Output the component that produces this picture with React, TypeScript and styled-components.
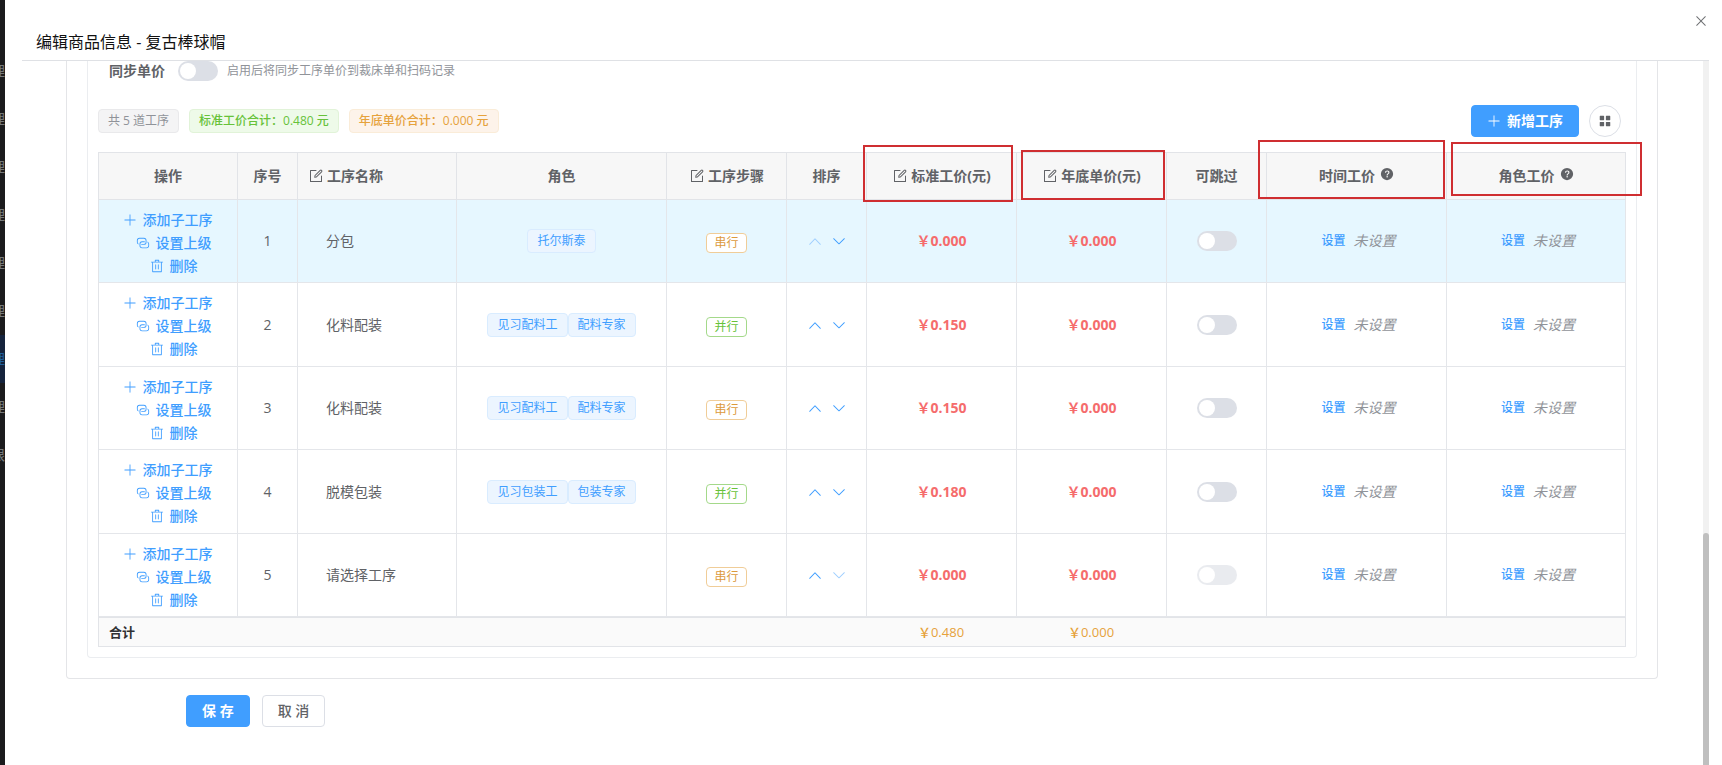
import React from "react";
import styled, { createGlobalStyle, css } from "styled-components";

const GlobalStyle = createGlobalStyle`
  * { box-sizing: border-box; }
  body {
    margin: 0;
    background: #fff;
    color: #606266;
    font-family: "Open Sans", "Noto Sans CJK SC", sans-serif;
    font-size: 14px;
    line-height: 20px;
  }
  button, input { font: inherit; margin: 0; }
  button { cursor: pointer; }
`;

/* ---------- icons ---------- */

const paths = {
  plus: ["M480 480V128a32 32 0 0 1 64 0v352h352a32 32 0 1 1 0 64H544v352a32 32 0 1 1-64 0V544H128a32 32 0 0 1 0-64h352z"],
  link: [
    "M640 384v64H448a128 128 0 0 0-128 128v128a128 128 0 0 0 128 128h320a128 128 0 0 0 128-128V576a128 128 0 0 0-64-110.848V394.88c74.56 26.368 128 97.472 128 181.056v128a192 192 0 0 1-192 192H448a192 192 0 0 1-192-192V576a192 192 0 0 1 192-192h192z",
    "M384 640v-64h192a128 128 0 0 0 128-128V320a128 128 0 0 0-128-128H256a128 128 0 0 0-128 128v128a128 128 0 0 0 64 110.848v70.272A192.064 192.064 0 0 1 64 448V320a192 192 0 0 1 192-192h320a192 192 0 0 1 192 192v128a192 192 0 0 1-192 192H384z",
  ],
  trash: ["M160 256H96a32 32 0 0 1 0-64h256V95.936a32 32 0 0 1 32-32h256a32 32 0 0 1 32 32V192h256a32 32 0 1 1 0 64h-64v672a32 32 0 0 1-32 32H192a32 32 0 0 1-32-32V256zm448-64v-64H416v64h192zM224 896h576V256H224v640zm192-128a32 32 0 0 1-32-32V416a32 32 0 0 1 64 0v320a32 32 0 0 1-32 32zm192 0a32 32 0 0 1-32-32V416a32 32 0 0 1 64 0v320a32 32 0 0 1-32 32z"],
  up: ["m488.832 344.32-339.84 356.672a32 32 0 0 0 0 44.16l.384.384a29.44 29.44 0 0 0 42.688 0l320-335.872 319.872 335.872a29.44 29.44 0 0 0 42.688 0l.384-.384a32 32 0 0 0 0-44.16L535.168 344.32a32 32 0 0 0-46.336 0z"],
  down: ["M831.872 340.864 512 652.672 192.128 340.864a30.592 30.592 0 0 0-42.752 0 29.12 29.12 0 0 0 0 41.6L489.664 714.24a32 32 0 0 0 44.672 0l340.288-331.712a29.12 29.12 0 0 0 0-41.728 30.592 30.592 0 0 0-42.752 0z"],
  edit: [
    "M832 512a32 32 0 1 1 64 0v352a32 32 0 0 1-32 32H160a32 32 0 0 1-32-32V160a32 32 0 0 1 32-32h352a32 32 0 0 1 0 64H192v640h640V512z",
    "m469.952 554.24 52.8-7.552L847.104 222.4a32 32 0 1 0-45.248-45.248L477.44 501.44l-7.552 52.8zm422.4-422.4a96 96 0 0 1 0 135.808l-331.84 331.84a32 32 0 0 1-18.112 9.088L436.8 623.68a32 32 0 0 1-36.224-36.224l15.104-105.6a32 32 0 0 1 9.024-18.112l331.904-331.84a96 96 0 0 1 135.744 0z",
  ],
  question: ["M512 64a448 448 0 1 1 0 896 448 448 0 0 1 0-896zm23.744 191.488c-52.096 0-92.928 14.784-123.2 44.352-30.976 29.568-45.76 70.4-45.76 122.496h80.256c0-29.568 5.632-52.8 17.6-68.992 13.376-19.712 35.2-28.864 66.176-28.864 23.936 0 42.944 6.336 56.32 19.712 12.672 13.376 19.712 31.68 19.712 54.912 0 17.6-6.336 34.496-19.008 49.984l-8.448 9.856c-45.76 40.832-73.216 70.4-82.368 89.408-9.856 19.008-14.08 42.24-14.08 68.992v9.856h80.96v-9.856c0-16.896 3.52-31.68 10.56-45.76 6.336-12.672 15.488-24.64 28.16-35.2 33.792-29.568 54.208-48.576 60.544-55.616 16.896-22.528 26.048-51.392 26.048-86.592 0-42.944-14.08-76.736-42.24-101.376-28.16-25.344-65.472-37.312-111.232-37.312zm-12.672 406.208a54.272 54.272 0 0 0-38.72 14.784 49.408 49.408 0 0 0-15.488 38.016c0 15.488 4.928 28.16 15.488 38.016A54.848 54.848 0 0 0 523.072 768c15.488 0 28.16-4.928 38.72-14.784a51.52 51.52 0 0 0 16.192-38.72 51.968 51.968 0 0 0-15.488-38.016 55.936 55.936 0 0 0-39.424-14.784z"],
  grid: ["M160 128h256q32 0 32 32v256q0 32-32 32H160q-32 0-32-32V160q0-32 32-32zM608 128h256q32 0 32 32v256q0 32-32 32H608q-32 0-32-32V160q0-32 32-32zM160 576h256q32 0 32 32v256q0 32-32 32H160q-32 0-32-32V608q0-32 32-32zM608 576h256q32 0 32 32v256q0 32-32 32H608q-32 0-32-32V608q0-32 32-32z"],
  close: ["M764.288 214.592 512 466.88 259.712 214.592a31.936 31.936 0 0 0-45.12 45.12L466.752 512 214.528 764.224a31.936 31.936 0 1 0 45.12 45.184L512 557.184l252.288 252.288a31.936 31.936 0 0 0 45.12-45.12L557.12 512.064l252.288-252.352a31.936 31.936 0 1 0-45.12-45.184z"],
};

const Svg = styled.svg<{ $size: number }>`
  display: block;
  flex: none;
  width: ${(p) => p.$size}px;
  height: ${(p) => p.$size}px;
  fill: currentColor;
`;

function Icon({ name, size = 14 }: { name: keyof typeof paths; size?: number }) {
  return (
    <Svg $size={size} viewBox="0 0 1024 1024" aria-hidden="true">
      {paths[name].map((d) => (
        <path key={d} d={d} />
      ))}
    </Svg>
  );
}

/* ---------- page frame ---------- */

const Page = styled.div`
  display: flex;
  height: 100vh;
  min-height: 720px;
  overflow: hidden;
`;

const Sidebar = styled.aside`
  width: 5px;
  flex: none;
  padding-top: 47px;
  overflow: hidden;
  background: #1b1b1d;
`;

const SideItem = styled.div<{ $active?: boolean }>`
  display: flex;
  align-items: center;
  justify-content: flex-end;
  height: 48px;
  color: ${(p) => (p.$active ? "#1f5f9e" : "#75797b")};
  background: ${(p) => (p.$active ? "#15233c" : "transparent")};
`;

const Drawer = styled.main`
  display: flex;
  flex-direction: column;
  flex: 1;
  min-width: 0;
  padding: 0 13px 0 17px;
`;

const DrawerHeader = styled.header`
  display: flex;
  align-items: flex-start;
  justify-content: space-between;
  flex: none;
  height: 61px;
  padding-left: 14px;
  border-bottom: 1px solid #dfe1e5;
`;

const Title = styled.h1`
  margin: 30px 0 0;
  color: #111;
  font-size: 16px;
  font-weight: 400;
  line-height: 24px;
`;

const CloseButton = styled.button`
  margin-top: 13px;
  padding: 0;
  border: 0;
  background: none;
  color: #6e7073;
`;

const Viewport = styled.div`
  display: flex;
  flex: 1;
  min-height: 0;
`;

const Content = styled.div`
  flex: 1;
  min-width: 0;
  padding: 0 45px 0 44px;
`;

const ScrollTrack = styled.div`
  display: flex;
  align-items: flex-end;
  width: 6px;
  flex: none;
  background: #f1f1f1;
`;

const ScrollThumb = styled.div`
  width: 100%;
  height: 33%;
  border-radius: 3px 3px 0 0;
  background: #bfbfbf;
`;

const Panel = styled.section`
  padding: 0 20px 20px;
  border: 1px solid #e4e5e8;
  border-top: 0;
  border-radius: 0 0 4px 4px;
`;

const InnerPanel = styled.div`
  padding: 0 10px 10px;
  border: 1px solid #ebedf0;
  border-top: 0;
  border-radius: 0 0 4px 4px;
`;

const SyncRow = styled.div`
  display: flex;
  align-items: center;
  height: 20px;
  padding-left: 11px;
`;

const SyncLabel = styled.label`
  margin-right: 13px;
  font-weight: 700;
`;

const Hint = styled.span`
  margin-left: 9px;
  color: #909399;
  font-size: 12px;
`;

const Switch = styled.input`
  display: block;
  appearance: none;
  width: 40px;
  height: 20px;
  padding: 2px;
  border-radius: 10px;
  background: #dcdfe6;
  cursor: pointer;
  &::before {
    content: "";
    display: block;
    width: 16px;
    height: 16px;
    border-radius: 50%;
    background: #fff;
  }
  &:checked { background: #409eff; }
  &:checked::before { margin-left: 20px; }
  &:disabled { opacity: 0.6; cursor: not-allowed; }
`;

const Toolbar = styled.div`
  display: flex;
  align-items: center;
  gap: 10px;
  margin: 24px 5px 15px 0;
`;

const Spacer = styled.div`
  flex: 1;
`;

const tones = {
  info: css`color: #909399; background: #f4f4f5; border-color: #e9e9eb;`,
  success: css`color: #67c23a; background: #eefae9; border-color: #e1f3d8;`,
  warning: css`color: #e6a23c; background: #fdf3ea; border-color: #faecd8;`,
  primary: css`color: #409eff; background: #ecf5ff; border-color: #d9ecff;`,
  plainWarning: css`color: #dc9a3c; background: #fff; border-color: #f0cd98;`,
  plainSuccess: css`color: #67c23a; background: #fff; border-color: #a4d98a;`,
};

const Tag = styled.span<{ $tone: keyof typeof tones; $small?: boolean; $strong?: boolean }>`
  display: inline-flex;
  align-items: center;
  height: ${(p) => (p.$small ? 20 : 24)}px;
  padding: 0 ${(p) => (p.$small ? 7 : 9)}px;
  border: 1px solid;
  border-radius: 4px;
  font-size: 12px;
  font-weight: ${(p) => (p.$strong ? 500 : 400)};
  white-space: nowrap;
  ${(p) => tones[p.$tone]}
`;

const Button = styled.button<{ $primary?: boolean }>`
  display: inline-flex;
  align-items: center;
  justify-content: center;
  gap: 6px;
  height: 32px;
  padding: 0 15px;
  border: 1px solid ${(p) => (p.$primary ? "#409eff" : "#dcdfe6")};
  border-radius: 4px;
  background: ${(p) => (p.$primary ? "#409eff" : "#fff")};
  color: ${(p) => (p.$primary ? "#fff" : "#606266")};
  font-weight: ${(p) => (p.$primary ? 700 : 500)};
`;

const RoundButton = styled.button`
  display: inline-flex;
  align-items: center;
  justify-content: center;
  width: 32px;
  height: 32px;
  padding: 0;
  border: 1px solid #dcdfe6;
  border-radius: 50%;
  background: #fff;
  color: #606266;
`;

/* ---------- table ---------- */

const Table = styled.table`
  width: 100%;
  table-layout: fixed;
  border-collapse: separate;
  border-spacing: 0;
  border: solid #e2e4e8;
  border-width: 1px 0 0 1px;
`;

const Col = styled.col<{ $width?: number }>`
  width: ${(p) => (p.$width ? `${p.$width}px` : "auto")};
`;

const HeadCell = styled.th`
  position: relative;
  height: 47px;
  padding: 0 10px;
  border: solid #e2e4e8;
  border-width: 0 1px 1px 0;
  background: #f7f7f7;
  font-weight: 700;
`;

const HeadLabel = styled.span<{ $left?: boolean }>`
  display: flex;
  align-items: center;
  justify-content: ${(p) => (p.$left ? "flex-start" : "center")};
  gap: 3px;
`;

const HelpMark = styled.span`
  padding: 0 0 4px 2px;
`;

/* Red frame laid over a heading; the four insets are measured from its cell. */
const Frame = styled.span<{ $inset: string }>`
  position: absolute;
  z-index: 1;
  inset: ${(p) => p.$inset};
  border: 2px solid #cf2e31;
  pointer-events: none;
`;

const Row = styled.tr<{ $current?: boolean }>`
  height: 83px;
  background: ${(p) => (p.$current ? "#e6f7ff" : "#fff")};
  &:nth-child(even) { height: 84px; }
`;

const Cell = styled.td<{ $name?: boolean }>`
  padding: ${(p) => (p.$name ? "0 10px 0 28px" : "0")};
  border: solid #e4e6ea;
  border-width: 0 1px 1px 0;
  text-align: ${(p) => (p.$name ? "left" : "center")};
`;

const Actions = styled.div`
  display: flex;
  flex-direction: column;
  align-items: center;
  gap: 3px;
  padding: 3px 1px 0 0;
`;

const LinkButton = styled.button<{ $shifted?: boolean }>`
  display: inline-flex;
  align-items: center;
  gap: 6px;
  margin-left: ${(p) => (p.$shifted ? 12 : 0)}px;
  padding: 0;
  border: 0;
  background: none;
  color: #409eff;
  font-weight: 500;
`;

const Centered = styled.div<{ $gap?: number }>`
  display: flex;
  align-items: center;
  justify-content: center;
  gap: ${(p) => p.$gap ?? 0}px;
`;

const StepTag = styled(Centered)`
  padding-top: 4px;
`;

const ArrowButton = styled.button`
  padding: 0;
  border: 0;
  background: none;
  color: #409eff;
  &:disabled { color: #a0cfff; cursor: not-allowed; }
`;

const Price = styled.span`
  color: #f56c6c;
  font-weight: 700;
`;

const SetButton = styled.button`
  padding: 0 4px;
  border: 0;
  background: none;
  color: #409eff;
  font-size: 12px;
  font-weight: 500;
`;

const Unset = styled.span`
  color: #909399;
  font-style: italic;
`;

const TotalCell = styled.td<{ $label?: boolean; $last?: boolean }>`
  height: 30px;
  padding: ${(p) => (p.$label ? "0 10px" : "0 2px 0 0")};
  border: solid #e2e4e8;
  border-width: 1px ${(p) => (p.$last ? 1 : 0)}px 1px 0;
  background: #fafafa;
  color: ${(p) => (p.$label ? "#303133" : "#e6a23c")};
  font-size: 13px;
  font-weight: ${(p) => (p.$label ? 700 : 500)};
  text-align: ${(p) => (p.$label ? "left" : "center")};
`;

const FormActions = styled.div`
  display: flex;
  gap: 12px;
  padding: 16px 0 0 120px;
`;

/* ---------- data ---------- */

type Process = {
  name: string;
  roles: string[];
  serial: boolean;
  price: string;
  yearEnd: string;
  locked?: boolean;
};

const processes: Process[] = [
  { name: "分包", roles: ["托尔斯泰"], serial: true, price: "0.000", yearEnd: "0.000" },
  { name: "化料配装", roles: ["见习配料工", "配料专家"], serial: false, price: "0.150", yearEnd: "0.000" },
  { name: "化料配装", roles: ["见习配料工", "配料专家"], serial: true, price: "0.150", yearEnd: "0.000" },
  { name: "脱模包装", roles: ["见习包装工", "包装专家"], serial: false, price: "0.180", yearEnd: "0.000" },
  { name: "请选择工序", roles: [], serial: true, price: "0.000", yearEnd: "0.000", locked: true },
];

type Column = {
  title: string;
  width?: number;
  edit?: boolean;
  help?: boolean;
  left?: boolean;
  frame?: string;
};

const columns: Column[] = [
  { title: "操作", width: 139 },
  { title: "序号", width: 60 },
  { title: "工序名称", width: 159, edit: true, left: true },
  { title: "角色" },
  { title: "工序步骤", width: 120, edit: true },
  { title: "排序", width: 80 },
  { title: "标准工价(元)", width: 150, edit: true, frame: "-8px 3px -3px -4px" },
  { title: "年底单价(元)", width: 150, edit: true, frame: "-3px 1px -1px 4px" },
  { title: "可跳过", width: 100 },
  { title: "时间工价", width: 180, help: true, frame: "-13px 1px 0 -9px" },
  { title: "角色工价", width: 179, help: true, frame: "-11px -17px 3px 4px" },
];

const sideItems = ["理", "理", "理", "理", "理", "理", "理", "理", "限"];

function SettingCell({ label }: { label: string }) {
  return (
    <Cell>
      <Centered $gap={4}>
        <SetButton type="button" aria-label={label}>设置</SetButton>
        <Unset>未设置</Unset>
      </Centered>
    </Cell>
  );
}

function ProcessRow({ item, index }: { item: Process; index: number }) {
  const last = index === processes.length - 1;
  return (
    <Row $current={index === 0}>
      <Cell>
        <Actions>
          <LinkButton type="button"><Icon name="plus" />添加子工序</LinkButton>
          <LinkButton type="button" $shifted><Icon name="link" />设置上级</LinkButton>
          <LinkButton type="button" $shifted><Icon name="trash" />删除</LinkButton>
        </Actions>
      </Cell>
      <Cell>{index + 1}</Cell>
      <Cell $name>{item.name}</Cell>
      <Cell>
        <Centered>
          {item.roles.map((role) => (
            <Tag key={role} $tone="primary">{role}</Tag>
          ))}
        </Centered>
      </Cell>
      <Cell>
        <StepTag>
          <Tag $small $tone={item.serial ? "plainWarning" : "plainSuccess"}>
            {item.serial ? "串行" : "并行"}
          </Tag>
        </StepTag>
      </Cell>
      <Cell>
        <Centered $gap={8}>
          <ArrowButton type="button" aria-label="上移" disabled={index === 0}><Icon name="up" size={16} /></ArrowButton>
          <ArrowButton type="button" aria-label="下移" disabled={last}><Icon name="down" size={16} /></ArrowButton>
        </Centered>
      </Cell>
      <Cell><Price>￥{item.price}</Price></Cell>
      <Cell><Price>￥{item.yearEnd}</Price></Cell>
      <Cell>
        <Centered>
          <Switch type="checkbox" role="switch" aria-label="可跳过" disabled={item.locked} />
        </Centered>
      </Cell>
      <SettingCell label="设置时间工价" />
      <SettingCell label="设置角色工价" />
    </Row>
  );
}

export default function App() {
  return (
    <Page>
      <GlobalStyle />
      <Sidebar aria-hidden="true">
        {sideItems.map((text, i) => (
          <SideItem key={i} $active={i === 6}>{text}</SideItem>
        ))}
      </Sidebar>
      <Drawer>
        <DrawerHeader>
          <Title>编辑商品信息 - 复古棒球帽</Title>
          <CloseButton type="button" aria-label="关闭"><Icon name="close" size={16} /></CloseButton>
        </DrawerHeader>
        <Viewport>
          <Content>
            <Panel>
              <InnerPanel>
                <SyncRow>
                  <SyncLabel htmlFor="sync-price">同步单价</SyncLabel>
                  <Switch id="sync-price" type="checkbox" role="switch" />
                  <Hint>启用后将同步工序单价到裁床单和扫码记录</Hint>
                </SyncRow>
                <Toolbar>
                  <Tag $tone="info">共 5 道工序</Tag>
                  <Tag $tone="success" $strong>标准工价合计：0.480 元</Tag>
                  <Tag $tone="warning" $strong>年底单价合计：0.000 元</Tag>
                  <Spacer />
                  <Button type="button" $primary><Icon name="plus" />新增工序</Button>
                  <RoundButton type="button" aria-label="列设置"><Icon name="grid" /></RoundButton>
                </Toolbar>
                <Table>
                  <colgroup>
                    {columns.map((c) => <Col key={c.title} $width={c.width} />)}
                  </colgroup>
                  <thead>
                    <tr>
                      {columns.map((c) => (
                        <HeadCell key={c.title} scope="col">
                          <HeadLabel $left={c.left}>
                            {c.edit && <Icon name="edit" size={16} />}
                            {c.title}
                            {c.help && <HelpMark><Icon name="question" /></HelpMark>}
                          </HeadLabel>
                          {c.frame && <Frame $inset={c.frame} />}
                        </HeadCell>
                      ))}
                    </tr>
                  </thead>
                  <tbody>
                    {processes.map((item, i) => <ProcessRow key={i} item={item} index={i} />)}
                  </tbody>
                  <tfoot>
                    <tr>
                      <TotalCell $label colSpan={6}>合计</TotalCell>
                      <TotalCell>￥0.480</TotalCell>
                      <TotalCell>￥0.000</TotalCell>
                      <TotalCell $last colSpan={3} />
                    </tr>
                  </tfoot>
                </Table>
              </InnerPanel>
            </Panel>
            <FormActions>
              <Button type="button" $primary>保 存</Button>
              <Button type="button">取 消</Button>
            </FormActions>
          </Content>
          <ScrollTrack aria-hidden="true"><ScrollThumb /></ScrollTrack>
        </Viewport>
      </Drawer>
    </Page>
  );
}
